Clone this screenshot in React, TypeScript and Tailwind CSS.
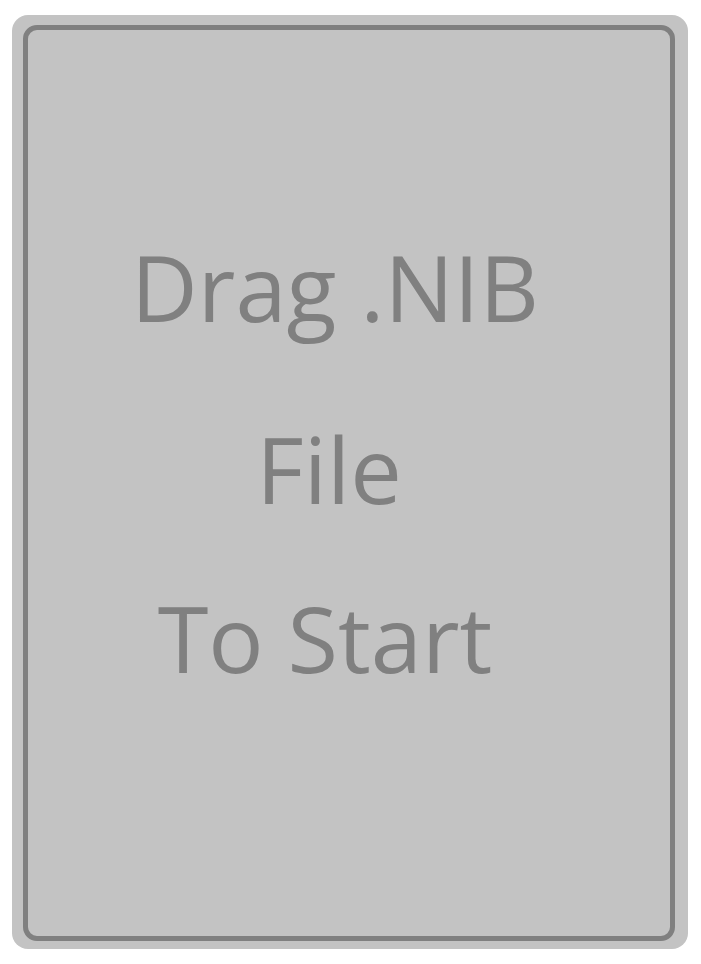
import React from "react";

export default function App() {
  return (
    <div className="w-[701px] h-[964px] bg-white pt-[15px] pl-[12px]">
      <div className="w-[676px] h-[934px] bg-[#c3c3c3] rounded-[16px] pt-[10px] pl-[11px] pr-[13px] pb-[8px]">
        <div
          className="h-full w-full border-[5px] border-[#808080] rounded-[14px] flex flex-col items-center pt-[211px] text-[#808080] text-[92px] leading-none"
          style={{ fontFamily: '"Open Sans", "Noto Sans", sans-serif' }}
        >
          <div className="h-[92px] pr-[28px] whitespace-nowrap">Drag .NIB</div>
          <div className="h-[92px] mt-[90px] pr-[40px] whitespace-nowrap">File</div>
          <div className="h-[92px] mt-[77px] pr-[48px] whitespace-nowrap">To Start</div>
        </div>
      </div>
    </div>
  );
}
